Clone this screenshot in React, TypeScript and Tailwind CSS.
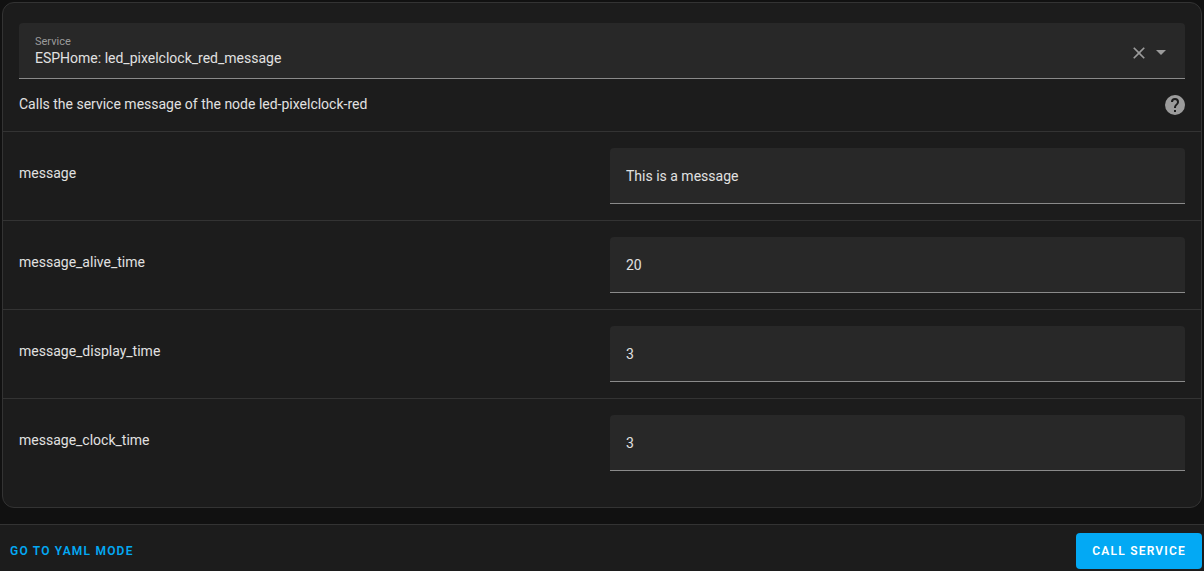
import { useState } from "react";

interface ServiceField {
  id: string;
  value: string;
}

const SERVICES = ["ESPHome: led_pixelclock_red_message"];

const INITIAL_FIELDS: ServiceField[] = [
  { id: "message", value: "This is a message" },
  { id: "message_alive_time", value: "20" },
  { id: "message_display_time", value: "3" },
  { id: "message_clock_time", value: "3" },
];

function Icon({ path, className }: { path: string; className: string }) {
  return (
    <svg viewBox="0 0 24 24" fill="currentColor" aria-hidden="true" className={className}>
      <path d={path} />
    </svg>
  );
}

const CLOSE =
  "M19,6.41L17.59,5L12,10.59L6.41,5L5,6.41L10.59,12L5,17.59L6.41,19L12,13.41L17.59,19L19,17.59L13.41,12L19,6.41Z";
const MENU_DOWN = "M7,11L12,16L17,11H7Z";
const HELP_CIRCLE =
  "M15.07,11.25L14.17,12.17C13.45,12.89 13,13.5 13,15H11V14.5C11,13.39 11.45,12.39 12.17,11.67L13.41,10.41C13.78,10.05 14,9.55 14,9C14,7.89 13.1,7 12,7A2,2 0 0,0 10,9H8A4,4 0 0,1 12,5A4,4 0 0,1 16,9C16,9.88 15.64,10.67 15.07,11.25M13,19H11V17H13M12,2A10,10 0 0,0 2,12A10,10 0 0,0 12,22A10,10 0 0,0 22,12C22,6.47 17.5,2 12,2Z";

export default function App() {
  const [service, setService] = useState(SERVICES[0]);
  const [fields, setFields] = useState(INITIAL_FIELDS);

  const update = (id: string, value: string) =>
    setFields(fields.map((f) => (f.id === id ? { ...f, value } : f)));

  return (
    <div className="min-h-screen flex flex-col bg-[#111111] text-[#e1e1e1] text-sm font-[Roboto,sans-serif]">
      <main className="px-0.5 pt-0.5 pb-4">
        <section className="rounded-xl border border-[#333333] bg-[#1c1c1c] pt-5 pb-5">
          <div className="relative mx-4">
            <label htmlFor="service" className="absolute left-4 top-3 text-[11px] leading-[14px] text-[#9b9b9b]">
              Service
            </label>
            <select
              id="service"
              value={service}
              onChange={(e) => setService(e.target.value)}
              className="block w-full h-14 appearance-none rounded-t border-b border-[#8a8a8a] bg-[#282828] pl-4 pr-20 pt-3.5 outline-none"
            >
              <option value="" />
              {SERVICES.map((s) => (
                <option key={s} value={s}>
                  {s}
                </option>
              ))}
            </select>
            <button
              type="button"
              aria-label="Clear"
              onClick={() => setService("")}
              className="absolute right-9 top-5 text-[#9b9b9b]"
            >
              <Icon path={CLOSE} className="size-5" />
            </button>
            <Icon
              path={MENU_DOWN}
              className="absolute right-3 top-4 size-6 text-[#9b9b9b] pointer-events-none"
            />
          </div>

          <div className="flex items-center justify-between h-[52px] pl-4 pr-3.5">
            <p className="pb-0.5">Calls the service message of the node led-pixelclock-red</p>
            <a href="#help" aria-label="Help" className="text-[#9b9b9b]">
              <Icon path={HELP_CIRCLE} className="size-6" />
            </a>
          </div>

          {fields.map((field) => (
            <div key={field.id} className="grid grid-cols-2 gap-4 border-t border-[#333333] p-4">
              <label htmlFor={field.id} className="pt-4 leading-[18px]">
                {field.id}
              </label>
              <input
                id={field.id}
                value={field.value}
                onChange={(e) => update(field.id, e.target.value)}
                className="w-full h-14 rounded-t border-b border-[#8a8a8a] bg-[#282828] px-4 outline-none"
              />
            </div>
          ))}
        </section>
      </main>

      <footer className="flex flex-1 items-center justify-between border-t border-[#333333] bg-[#1c1c1c] pl-0.5 pr-0.5 pt-2 pb-0.5 text-xs font-semibold tracking-widest">
        <button type="button" className="h-9 px-2 text-[#03a9f4]">
          GO TO YAML MODE
        </button>
        <button type="button" className="h-9 rounded bg-[#03a9f4] px-4 text-white">
          CALL SERVICE
        </button>
      </footer>
    </div>
  );
}
